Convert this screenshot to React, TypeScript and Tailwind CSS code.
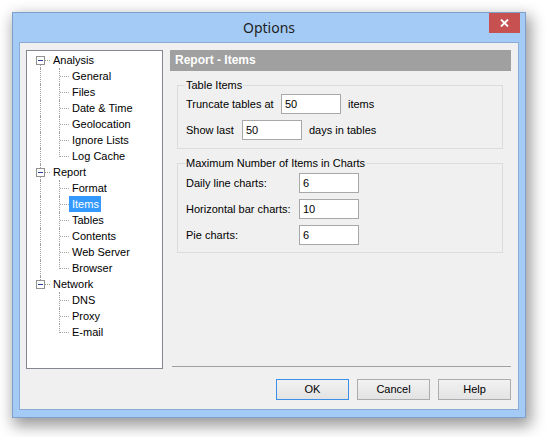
import React from 'react';

const tree = [
  { label: 'Analysis', children: ['General', 'Files', 'Date & Time', 'Geolocation', 'Ignore Lists', 'Log Cache'] },
  { label: 'Report', children: ['Format', 'Items', 'Tables', 'Contents', 'Web Server', 'Browser'] },
  { label: 'Network', children: ['DNS', 'Proxy', 'E-mail'] },
];

const dot = 'absolute border-dotted border-[#a0a0a0]';

function RootRow({ label, first, last }: { label: string; first: boolean; last: boolean }) {
  return (
    <div className="flex h-[16px]">
      <div className="relative w-[23px] h-full shrink-0">
        {!first && <span className={`${dot} left-[13px] top-0 h-[4px] border-l`} />}
        {!last && <span className={`${dot} left-[13px] top-[13px] bottom-0 border-l`} />}
        <span className="absolute left-[9px] top-[4px] w-[9px] h-[9px] border border-[#919191] bg-white flex items-center justify-center">
          <span className="w-[5px] h-px bg-[#2a3f9a]" />
        </span>
        <span className={`${dot} left-[18px] top-[8px] w-[5px] border-t`} />
      </div>
      <span className="pl-[3px] pr-[2px] leading-[16px]">{label}</span>
    </div>
  );
}

function ChildRow({ label, parentLast, lastChild, selected }: { label: string; parentLast: boolean; lastChild: boolean; selected: boolean }) {
  return (
    <div className="flex h-[16px]">
      <div className="relative w-[23px] h-full shrink-0">
        {!parentLast && <span className={`${dot} left-[13px] top-0 bottom-0 border-l`} />}
      </div>
      <div className="relative w-[19px] h-full shrink-0">
        <span className={`${dot} left-[9px] top-0 border-l ${lastChild ? 'h-[9px]' : 'bottom-0'}`} />
        <span className={`${dot} left-[10px] top-[8px] w-[9px] border-t`} />
      </div>
      <span className={`pl-[3px] pr-[2px] leading-[16px] ${selected ? 'bg-[#3399ff] text-white' : ''}`}>{label}</span>
    </div>
  );
}

function Field({ value, className = '' }: { value: string; className?: string }) {
  return (
    <input
      readOnly
      value={value}
      className={`w-[60px] h-[20px] border border-[#a8a8a8] bg-white px-[3px] text-[11px] outline-none ${className}`}
    />
  );
}

function Group({ title, className = '', children }: { title: string; className?: string; children: React.ReactNode }) {
  return (
    <div className={`relative ml-[7px] w-[326px] border border-[#dcdcdc] pl-[8px] flex flex-col gap-[6px] ${className}`}>
      <span className="absolute top-[-8px] left-[7px] px-[1px] bg-[#f0f0f0] leading-[14px]">{title}</span>
      {children}
    </div>
  );
}

function Btn({ label, primary }: { label: string; primary?: boolean }) {
  return (
    <button
      className={`w-[73px] h-[21px] border bg-gradient-to-b from-[#f2f2f2] to-[#e3e3e3] text-[11px] ${
        primary ? 'border-[#3c8fe6]' : 'border-[#acacac]'
      }`}
    >
      {label}
    </button>
  );
}

export default function App() {
  return (
    <div className="min-h-screen bg-white font-['Liberation_Sans',Arial,sans-serif] text-[11px] text-black">
      <div className="pt-[12px] pl-[12px]">
        <div className="relative w-[514px] h-[406px] border border-[#7f9fcb] bg-[#a4cbf5] px-[6px] pb-[7px] flex flex-col shadow-[3px_6px_14px_2px_rgba(0,0,0,0.4)]">
          <div className="h-[29px] flex items-center justify-center font-['Noto_Sans',sans-serif] text-[14px] text-[#1e1e1e]">
            Options
          </div>
          <div className="absolute top-0 right-[5px] w-[31px] h-[20px] bg-[#c75050] flex items-center justify-center">
            <svg width="9" height="8" viewBox="0 0 9 8">
              <path d="M1 0.5 L8 7.5 M8 0.5 L1 7.5" stroke="white" strokeWidth="1.8" />
            </svg>
          </div>

          <div className="h-[368px] border border-[#8aabd6] bg-[#f0f0f0] pt-[7px] pl-[6px] pr-[7px] pb-[9px] flex flex-col">
            <div className="flex h-[319px] gap-[7px]">
              <div className="w-[137px] shrink-0 border border-[#828790] bg-white pt-[1px]">
                {tree.map((node, i) => (
                  <div key={node.label}>
                    <RootRow label={node.label} first={i === 0} last={i === tree.length - 1} />
                    {node.children.map((c, j) => (
                      <ChildRow
                        key={c}
                        label={c}
                        parentLast={i === tree.length - 1}
                        lastChild={j === node.children.length - 1}
                        selected={c === 'Items'}
                      />
                    ))}
                  </div>
                ))}
              </div>

              <div className="flex-1 flex flex-col">
                <div className="h-[21px] bg-[#a0a0a0] pl-[5px] text-white font-bold text-[12px] leading-[21px]">Report - Items</div>

                <Group title="Table Items" className="mt-[14px] pt-[8px] pb-[8px]">
                  <div className="flex items-center h-[20px]">
                    <span className="w-[95px]">Truncate tables at</span>
                    <Field value="50" />
                    <span className="ml-[7px]">items</span>
                  </div>
                  <div className="flex items-center h-[20px]">
                    <span className="w-[56px]">Show last</span>
                    <Field value="50" />
                    <span className="ml-[7px]">days in tables</span>
                  </div>
                </Group>

                <Group title="Maximum Number of Items in Charts" className="mt-[14px] pt-[9px] pb-[7px]">
                  {[
                    ['Daily line charts:', '6'],
                    ['Horizontal bar charts:', '10'],
                    ['Pie charts:', '6'],
                  ].map(([l, v]) => (
                    <div key={l} className="flex items-center h-[20px]">
                      <span className="w-[113px]">{l}</span>
                      <Field value={v} />
                    </div>
                  ))}
                </Group>

                <div className="flex-1" />
                <div className="ml-[2px] h-px bg-[#a0a0a0] mb-[2px]" />
              </div>
            </div>

            <div className="mt-[10px] flex justify-end gap-[8px]">
              <Btn label="OK" primary />
              <Btn label="Cancel" />
              <Btn label="Help" />
            </div>
          </div>
        </div>
      </div>
    </div>
  );
}
